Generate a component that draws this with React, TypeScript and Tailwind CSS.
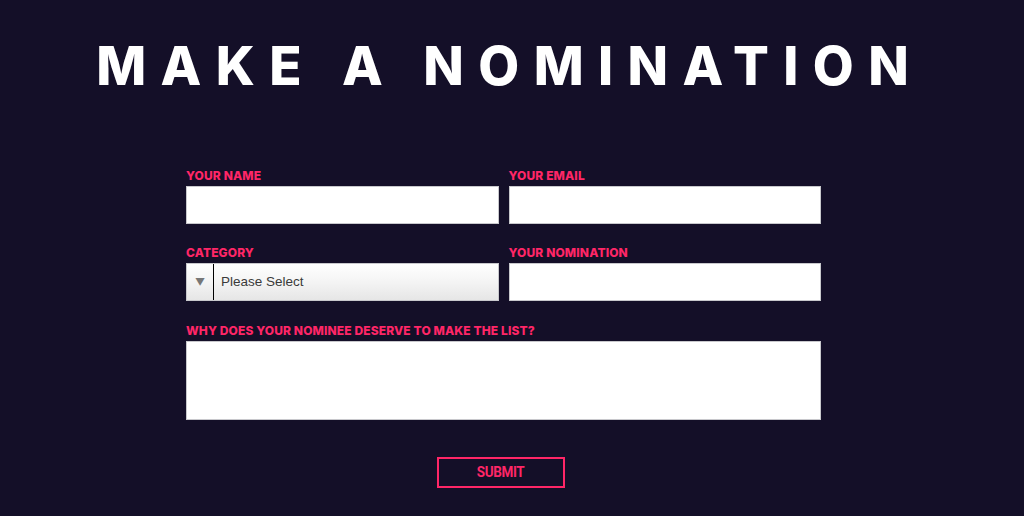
import { useState } from 'react'

const pink = 'text-[#ff2667]'

function Field({ label, children }: { label: string; children: React.ReactNode }) {
  return (
    <label className="flex flex-col">
      <span className={`${pink} text-[12px] font-extrabold leading-[14px] mb-[3px] tracking-[0.01em]`}>{label}</span>
      {children}
    </label>
  )
}

export default function App() {
  const [category, setCategory] = useState('')

  return (
    <div className="min-h-[516px] w-full bg-[#140f28] font-['Inter',sans-serif] overflow-hidden">
      <div className="w-[1005px]">
        {/* Heading */}
        <h1 className="pt-[36px] text-center text-white text-[53px] font-extrabold leading-[60px] tracking-[0.272em] pl-[0.272em]">
          MAKE A NOMINATION
        </h1>

        {/* Form */}
        <form className="ml-[186px] mt-[73px] w-[635px]" onSubmit={(e) => e.preventDefault()}>
          <div className="grid grid-cols-2 gap-x-[10px] gap-y-[22px]">
            <Field label="YOUR NAME">
              <input className="h-[38px] bg-white border border-[#c8c8cc] outline-none px-2" />
            </Field>
            <Field label="YOUR EMAIL">
              <input type="email" className="h-[38px] bg-white border border-[#c8c8cc] outline-none px-2" />
            </Field>
            <Field label="CATEGORY">
              <div className="relative h-[38px] flex border border-[#c8c8cc] bg-gradient-to-b from-white via-[#f4f4f4] to-[#e6e6e6]">
                <div className="w-[27px] flex items-center justify-center text-[#777] text-[10px] border-r border-black">▼</div>
                <select
                  value={category}
                  onChange={(e) => setCategory(e.target.value)}
                  className="flex-1 appearance-none bg-transparent outline-none pl-[7px] text-[13.5px] text-[#3a3a3a] font-['Liberation_Sans',sans-serif]"
                >
                  <option value="">Please Select</option>
                  <option value="a">Innovator</option>
                  <option value="b">Leader</option>
                </select>
              </div>
            </Field>
            <Field label="YOUR NOMINATION">
              <input className="h-[38px] bg-white border border-[#c8c8cc] outline-none px-2" />
            </Field>
            <div className="col-span-2 mt-[1px]">
              <Field label="WHY DOES YOUR NOMINEE DESERVE TO MAKE THE LIST?">
                <textarea className="h-[79px] resize-none bg-white border border-[#c8c8cc] outline-none p-2" />
              </Field>
            </div>
          </div>

          <div className="flex mt-[37px] ml-[251px]">
            <button
              type="submit"
              className={`w-[128px] h-[31px] border-2 border-[#ff2667] ${pink} text-[15px] font-bold font-['Roboto',sans-serif] tracking-tight`}
            >
              <span className="inline-block scale-x-[0.9]">SUBMIT</span>
            </button>
          </div>
        </form>
      </div>
    </div>
  )
}
